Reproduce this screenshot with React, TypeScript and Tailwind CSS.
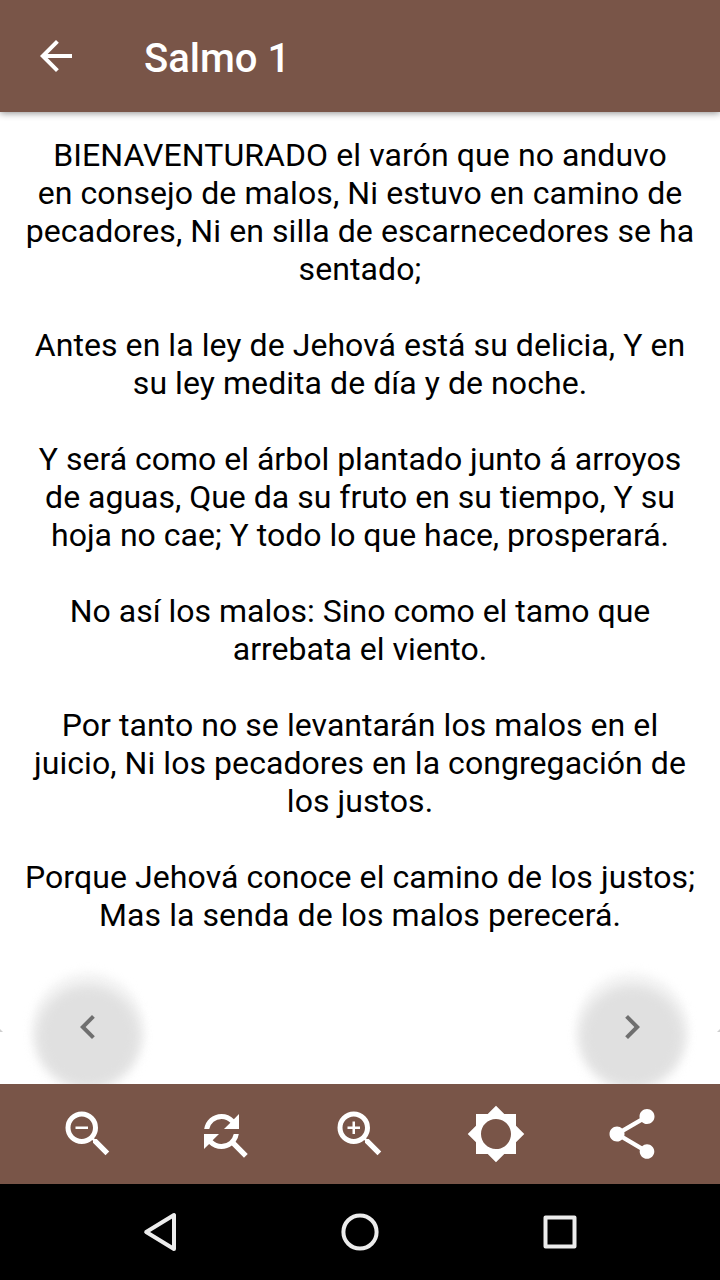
import type { ReactNode } from 'react';
import { MdArrowBack, MdBrightnessLow, MdChevronLeft, MdChevronRight, MdFindReplace, MdShare, MdZoomIn, MdZoomOut } from 'react-icons/md';

interface Verse {
  id: number;
  tracking: string;
  lines: string[];
}

const VERSES: Verse[] = [
  {
    id: 1,
    tracking: 'tracking-[0.09px]',
    lines: [
      'BIENAVENTURADO el varón que no anduvo',
      'en consejo de malos, Ni estuvo en camino de',
      'pecadores, Ni en silla de escarnecedores se ha',
      'sentado;',
    ],
  },
  {
    id: 2,
    tracking: 'tracking-[0.06px]',
    lines: ['Antes en la ley de Jehová está su delicia, Y en', 'su ley medita de día y de noche.'],
  },
  {
    id: 3,
    tracking: 'tracking-normal',
    lines: [
      'Y será como el árbol plantado junto á arroyos',
      'de aguas, Que da su fruto en su tiempo, Y su',
      'hoja no cae; Y todo lo que hace, prosperará.',
    ],
  },
  {
    id: 4,
    tracking: 'tracking-normal',
    lines: ['No así los malos: Sino como el tamo que', 'arrebata el viento.'],
  },
  {
    id: 5,
    tracking: 'tracking-[0.06px]',
    lines: [
      'Por tanto no se levantarán los malos en el',
      'juicio, Ni los pecadores en la congregación de',
      'los justos.',
    ],
  },
  {
    id: 6,
    tracking: 'tracking-[0.08px]',
    lines: ['Porque Jehová conoce el camino de los justos;', 'Mas la senda de los malos perecerá.'],
  },
];

const TOOLS = [
  { label: 'Reducir texto', Icon: MdZoomOut },
  { label: 'Restablecer texto', Icon: MdFindReplace },
  { label: 'Ampliar texto', Icon: MdZoomIn },
  { label: 'Brillo', Icon: MdBrightnessLow },
  { label: 'Compartir', Icon: MdShare },
];

function PageButton({ label, children }: { label: string; children: ReactNode }) {
  return (
    <button aria-label={label} className="relative flex size-28 items-center justify-center text-[#6f6f6f]">
      {/* translucent disc over its own soft shadow */}
      <span className="absolute left-0 top-0 size-28 rounded-full bg-[#f5f5f5] blur-[4px]" />
      <span className="absolute left-[4px] top-[13px] size-[104px] rounded-full bg-[#e0e0e0] blur-[6px]" />
      <span className="relative pb-0.5">{children}</span>
    </button>
  );
}

export default function App() {
  return (
    <div className="flex h-[1280px] w-[720px] flex-col overflow-hidden bg-white font-[Roboto,sans-serif]">
      {/* Top bar */}
      <header className="relative z-10 flex h-28 shrink-0 items-center bg-[#795548] pl-8 text-white shadow-[0_1px_7px_rgba(0,0,0,0.45)]">
        <button aria-label="Volver">
          <MdArrowBack size={48} />
        </button>
        <h1 className="ml-16 pt-1.5 text-[40px] font-medium leading-[48px]">Salmo 1</h1>
      </header>

      {/* Psalm text */}
      <main className="relative flex flex-1 flex-col overflow-hidden">
        <div className="flex flex-col gap-[38px] pt-6 text-center text-[32px] leading-[38px] text-black">
          {VERSES.map((verse) => (
            <p key={verse.id} className={verse.tracking}>
              {verse.lines.map((line) => (
                <span key={line} className="block whitespace-nowrap">{line}</span>
              ))}
            </p>
          ))}
        </div>

        {/* Card corners */}
        <svg className="absolute bottom-[52px] left-0" width="3" height="3" viewBox="0 0 3 3" fill="#cfcfcf">
          <path d="M0 0l3 3H0z" />
        </svg>
        <svg className="absolute bottom-[52px] right-0" width="3" height="3" viewBox="0 0 3 3" fill="#cfcfcf">
          <path d="M3 0v3H0z" />
        </svg>

        {/* Previous / next */}
        <div className="mt-auto flex justify-between px-8">
          <PageButton label="Salmo anterior">
            <MdChevronLeft size={48} />
          </PageButton>
          <PageButton label="Salmo siguiente">
            <MdChevronRight size={48} />
          </PageButton>
        </div>
      </main>

      {/* Tools */}
      <div className="relative flex h-[100px] shrink-0 items-center justify-between bg-[#795548] px-[58px] text-white">
        {TOOLS.map(({ label, Icon }) => (
          <button key={label} aria-label={label}>
            <Icon size={60} />
          </button>
        ))}
      </div>

      {/* System navigation */}
      <nav className="flex h-24 shrink-0 items-center justify-between bg-black px-[140px]">
        <svg width="40" height="40" viewBox="0 0 40 40" fill="none" stroke="#ececec" strokeWidth="4" strokeLinejoin="round">
          <path d="M34 3v34L6.2 20z" />
        </svg>
        <svg width="40" height="40" viewBox="0 0 40 40" fill="none" stroke="#ececec" strokeWidth="4">
          <circle cx="20" cy="20" r="16.6" />
        </svg>
        <svg width="40" height="40" viewBox="0 0 40 40" fill="none" stroke="#ececec" strokeWidth="4" strokeLinejoin="round">
          <path d="M5.5 5.5h29v29h-29z" />
        </svg>
      </nav>
    </div>
  );
}
